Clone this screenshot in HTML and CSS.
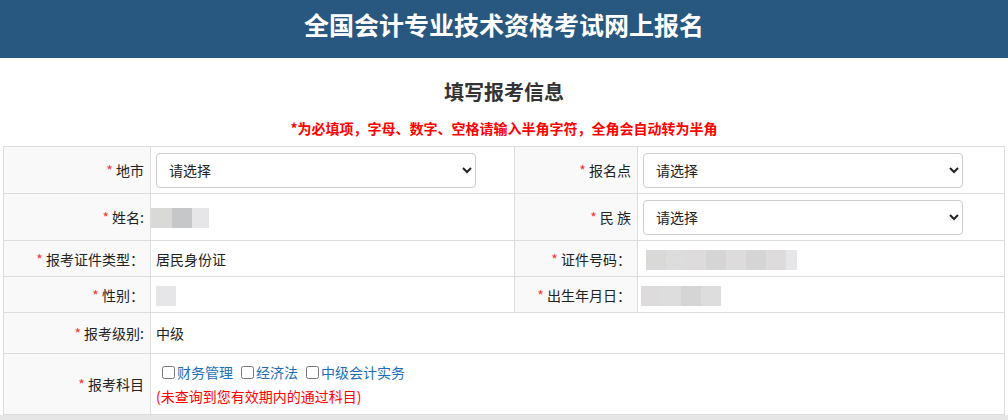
FILE: index.html
```html
<!DOCTYPE html>
<html>
<head>
    <meta charset="utf-8">
    <title>全国会计专业技术资格考试网上报名</title>
    <link rel="stylesheet" href="styles.css">
</head>
<body>
    <div class="header">全国会计专业技术资格考试网上报名</div>

    <h2 class="page-title">填写报考信息</h2>
    <p class="notice">*为必填项，字母、数字、空格请输入半角字符，全角会自动转为半角</p>

    <table class="form-table">
        <colgroup>
            <col class="c1"><col class="c2"><col class="c3"><col class="c4">
        </colgroup>
        <tr class="row-select">
            <td class="label"><span class="req">*</span> 地市</td>
            <td class="value">
                <select class="sel"><option>请选择</option></select>
            </td>
            <td class="label"><span class="req">*</span> 报名点</td>
            <td class="value">
                <select class="sel"><option>请选择</option></select>
            </td>
        </tr>
        <tr class="row-select">
            <td class="label"><span class="req">*</span> 姓名:</td>
            <td class="value flush">
                <span class="blur"><i class="g1 w21"></i><i class="g2 w20"></i><i class="g3 w17"></i></span>
            </td>
            <td class="label"><span class="req">*</span> 民 族</td>
            <td class="value">
                <select class="sel"><option>请选择</option></select>
            </td>
        </tr>
        <tr class="row-small">
            <td class="label"><span class="req">*</span> 报考证件类型：</td>
            <td class="value">居民身份证</td>
            <td class="label"><span class="req">*</span> 证件号码：</td>
            <td class="value">
                <span class="blur id-blur"><i class="g1 w20"></i><i class="g4 w20"></i><i class="g5 w20"></i><i class="g6 w20"></i><i class="g5 w20"></i><i class="g6 w20"></i><i class="g5 w20"></i><i class="g3 w11"></i></span>
            </td>
        </tr>
        <tr class="row-small">
            <td class="label"><span class="req">*</span> 性别：</td>
            <td class="value">
                <span class="blur"><i class="g3 w20"></i></span>
            </td>
            <td class="label"><span class="req">*</span> 出生年月日：</td>
            <td class="value birth">
                <span class="blur"><i class="g5 w20"></i><i class="g4 w20"></i><i class="g6 w20"></i><i class="g4 w20"></i></span>
            </td>
        </tr>
        <tr class="row-level">
            <td class="label"><span class="req">*</span> 报考级别:</td>
            <td class="value" colspan="3">中级</td>
        </tr>
        <tr class="row-subject">
            <td class="label"><span class="req">*</span> 报考科目</td>
            <td class="value" colspan="3">
                <div class="subjects">
                    <label><input type="checkbox">财务管理</label>
                    <label><input type="checkbox">经济法</label>
                    <label><input type="checkbox">中级会计实务</label>
                </div>
                <div class="subject-tip">(未查询到您有效期内的通过科目)</div>
            </td>
        </tr>
    </table>

    <div class="footer-bar"></div>
</body>
</html>
```

FILE: styles.css
```css
body {
    margin: 0;
    font-family: "Noto Sans CJK SC", "Noto Sans", sans-serif;
    font-size: 14px;
    color: #333;
    background: #fff;
}
.header {
    height: 58px;
    box-sizing: border-box;
    padding-top: 5px;
    line-height: 38px;
    background: #28577f;
    color: #fff;
    font-size: 25px;
    font-weight: bold;
    text-align: center;
}
.page-title {
    margin: 0;
    padding-top: 20px;
    line-height: 28px;
    font-size: 20px;
    font-weight: bold;
    text-align: center;
    color: #333;
}
.notice {
    margin: 12px 0 0;
    line-height: 20px;
    font-size: 14px;
    font-weight: bold;
    color: #f00;
    text-align: center;
}
.form-table {
    margin: 8px 0 0 3px;
    width: 1001px;
    border-collapse: collapse;
    table-layout: fixed;
}
.c1 { width: 147px; }
.c2 { width: 364px; }
.c3 { width: 123px; }
.c4 { width: 367px; }
.form-table td {
    border: 1px solid #ddd;
    padding: 0;
    color: #222;
}
.label {
    background: #f9f9f9;
    text-align: right;
    padding-right: 6px !important;
    white-space: nowrap;
}
.value {
    padding-left: 5px !important;
    background: #fff;
}
.value.flush {
    padding-left: 0 !important;
}
.value.birth {
    padding-left: 3px !important;
}
.req {
    color: #f33;
}
.row-select td { height: 46px; }
.row-small td { height: 35px; }
.row-level td { height: 40px; }
.row-subject td { height: 60px; }
.sel {
    width: 320px;
    height: 35px;
    padding: 0 8px;
    border: 1px solid #ccc;
    border-radius: 4px;
    background: #fff;
    font-family: inherit;
    font-size: 14px;
    color: #222;
    vertical-align: middle;
}
.blur {
    display: inline-flex;
    height: 20px;
    vertical-align: middle;
}
.blur i {
    display: block;
    height: 20px;
}
.id-blur {
    margin-left: 3px;
}
.w11 { width: 11px; }
.w17 { width: 17px; }
.w20 { width: 20px; }
.w21 { width: 21px; }
.g1 { background: #d9d9d8; }
.g2 { background: #c6c7c8; }
.g3 { background: #e6e6e8; }
.g4 { background: #dcdddc; }
.g5 { background: #dddbdb; }
.g6 { background: #d4d5d4; }
.subjects {
    display: flex;
    gap: 5px;
    padding-left: 3px;
    line-height: 20px;
}
.subjects label {
    display: flex;
    align-items: center;
    color: #1a6fb8;
}
.subjects input {
    margin: 0 2px 0 3px;
    width: 13px;
    height: 13px;
}
.subject-tip {
    margin-top: 4px;
    line-height: 20px;
    color: #f00;
}
.footer-bar {
    height: 40px;
    background: #e6e6e6;
}
```
